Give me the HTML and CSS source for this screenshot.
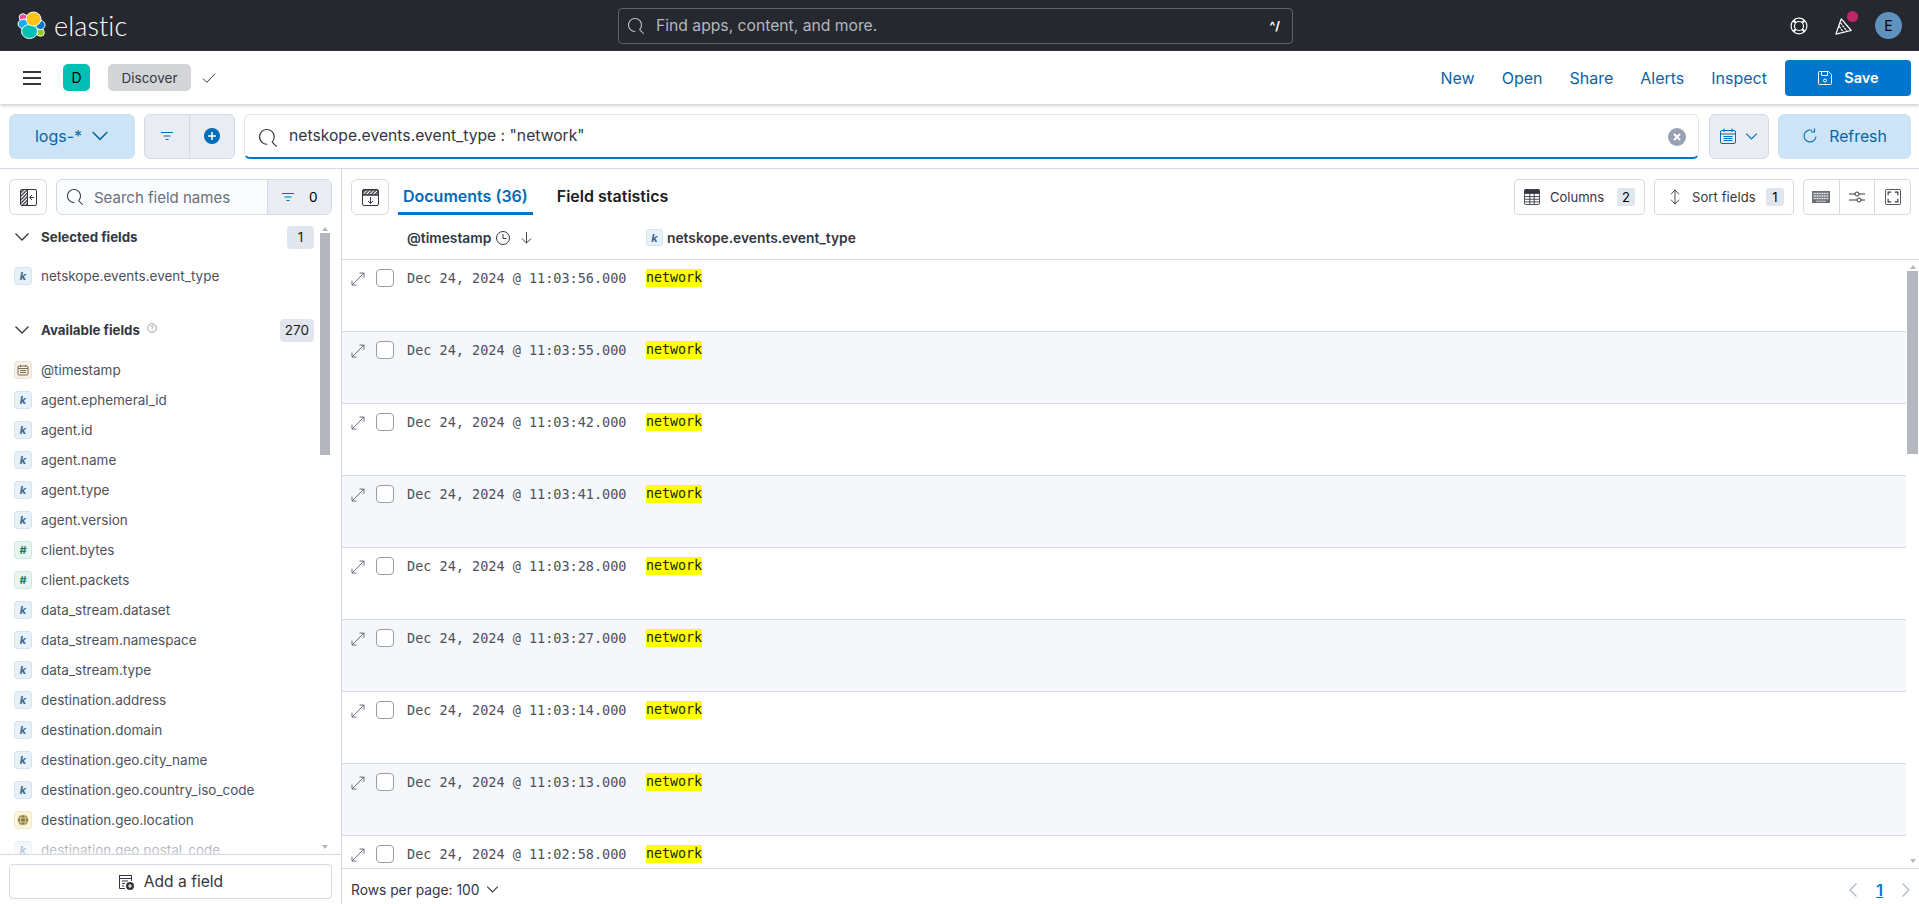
FILE: index.html
```html
<!DOCTYPE html>
<html lang="en">
<head>
    <meta charset="UTF-8">
    <meta name="viewport" content="width=device-width, initial-scale=1.0">
    <title>Discover - Elastic</title>
    <link rel="stylesheet" href="styles.css">
</head>
<body>
    <!-- shared icons -->
    <svg class="sprite" xmlns="http://www.w3.org/2000/svg">
        <symbol id="i-search" viewBox="0 0 16 16">
            <path d="M11.27 11.98l3.87 3.87a.5.5 0 0 0 .71-.71l-3.57-3.56c2.38-2.75 2.27-6.92-.34-9.53-2.73-2.73-7.17-2.73-9.9 0-2.73 2.73-2.73 7.17 0 9.9a6.96 6.96 0 0 0 4.95 2.05.5.5 0 0 0 0-1 5.96 5.96 0 0 1-4.24-1.76 6.01 6.01 0 0 1 0-8.49c2.34-2.34 6.14-2.34 8.48 0a6.01 6.01 0 0 1 .04 8.49z" fill="currentColor"/>
        </symbol>
        <symbol id="i-down" viewBox="0 0 16 16">
            <path d="M1.500 4.500L8 11l6.500-6.500" fill="none" stroke="currentColor" stroke-width="1.300"/>
        </symbol>
        <symbol id="i-filter" viewBox="0 0 16 16">
            <path d="M2 4.500h12M4.500 8h7M6.500 11.500h3" fill="none" stroke="currentColor" stroke-width="1.200"/>
        </symbol>
        <symbol id="i-expand" viewBox="0 0 14 14">
            <path d="M8.500 1h4.500v4.500M13 1L1 13M1 8.500V13h4.500" fill="none" stroke="currentColor" stroke-width="1"/>
        </symbol>
        <pattern id="hatch" width="2.500" height="2.500" patternUnits="userSpaceOnUse" patternTransform="rotate(45)">
            <rect width="2.500" height="2.500" fill="#fff"/>
            <rect width="1.300" height="2.500" fill="#343741"/>
        </pattern>
    </svg>

    <header class="top-bar">
        <div class="brand">
            <svg class="brand-logo" viewBox="0 0 27 27" stroke="#fff" stroke-width="1">
                <ellipse cx="5" cy="5.500" rx="3.800" ry="3.800" fill="#f04e98"/>
                <ellipse cx="6" cy="12" rx="6" ry="4.800" fill="#1ba9f5"/>
                <ellipse cx="22.500" cy="20.500" rx="3.800" ry="3.800" fill="#93c90e"/>
                <ellipse cx="22.500" cy="13" rx="4.500" ry="4.500" fill="#0077cc"/>
                <ellipse cx="11.500" cy="19.500" rx="8" ry="7" fill="#00bfb3"/>
                <ellipse cx="15.500" cy="7" rx="7.500" ry="7" fill="#fec514"/>
            </svg>
            <span class="brand-name">elastic</span>
        </div>
        <div class="global-search">
            <svg class="icon"><use href="#i-search"/></svg>
            <span class="global-search-text">Find apps, content, and more.</span>
            <span class="global-search-key">^/</span>
        </div>
        <div class="top-actions">
            <svg class="help-icon" viewBox="0 0 20 20" fill="none" stroke="#fff" stroke-width="1.300">
                <circle cx="10" cy="10" r="8.800"/>
                <circle cx="10" cy="10" r="5"/>
                <path d="M3.800 3.800l2.700 2.700M16.200 3.800l-2.700 2.700M3.800 16.200l2.700-2.700M16.200 16.200l-2.700-2.700" stroke-width="2.400"/>
            </svg>
            <div class="news">
                <svg class="news-icon" viewBox="0 0 20 20" fill="none" stroke="#fff" stroke-width="1.400">
                    <path d="M7 2l11 13-17 4z" stroke-linejoin="round"/>
                    <path d="M4.800 10.500l5 7M6.200 6.500l7.500 9.800" stroke-dasharray="2.500 1"/>
                </svg>
                <span class="news-dot"></span>
            </div>
            <span class="user-avatar">E</span>
        </div>
    </header>

    <nav class="app-bar">
        <div class="app-bar-left">
            <svg class="menu-icon" viewBox="0 0 18 14">
                <path d="M0 1h18M0 7h18M0 13h18" stroke="#343741" stroke-width="2"/>
            </svg>
            <span class="space-badge">D</span>
            <span class="crumb">Discover</span>
            <svg class="crumb-check" viewBox="0 0 16 16">
                <path d="M1 8.500l4.500 4.500 9.500-10" fill="none" stroke="#343741" stroke-width="1.100"/>
            </svg>
        </div>
        <div class="app-bar-right">
            <a class="app-link" href="#">New</a>
            <a class="app-link" href="#">Open</a>
            <a class="app-link" href="#">Share</a>
            <a class="app-link" href="#">Alerts</a>
            <a class="app-link" href="#">Inspect</a>
            <button class="save-btn">
                <svg class="icon" viewBox="0 0 16 16" fill="none" stroke="#fff" stroke-width="1">
                    <path d="M1.500 2.500a1 1 0 0 1 1-1h9l3 3v9a1 1 0 0 1-1 1h-11a1 1 0 0 1-1-1z"/>
                    <path d="M4.500 1.500v4h6v-4"/>
                    <circle cx="8" cy="10.500" r="1.500"/>
                </svg>
                Save
            </button>
        </div>
    </nav>

    <div class="query-bar">
        <button class="index-btn">logs-* <svg class="index-chevron"><use href="#i-down"/></svg></button>
        <div class="filter-group">
            <span class="filter-cell"><svg class="icon"><use href="#i-filter"/></svg></span>
            <span class="filter-cell">
                <svg class="icon" viewBox="0 0 16 16">
                    <circle cx="8" cy="8" r="8" fill="#006bb8"/>
                    <path d="M8 4v8M4 8h8" stroke="#fff" stroke-width="1.500"/>
                </svg>
            </span>
        </div>
        <div class="query-input">
            <svg class="query-search"><use href="#i-search"/></svg>
            <span class="query-text">netskope.events.event_type : "network"</span>
            <svg class="query-clear" viewBox="0 0 18 18">
                <circle cx="9" cy="9" r="9" fill="#98a2b3"/>
                <path d="M6 6l6 6M12 6l-6 6" stroke="#fff" stroke-width="2"/>
            </svg>
        </div>
        <button class="date-btn">
            <svg class="calendar-icon" viewBox="0 0 16 16" fill="none" stroke="#006bb8" stroke-width="1">
                <rect x="0.500" y="2.500" width="15" height="13" rx="1.500"/>
                <path d="M.500 6h15M4 .500v3.500M12 .500v3.500M3.500 8.500h9M3.500 10.500h9M3.500 12.500h9" />
            </svg>
            <svg class="chevron-sm"><use href="#i-down"/></svg>
        </button>
        <button class="refresh-btn">
            <svg class="icon" viewBox="0 0 16 16" fill="none" stroke="#006bb8" stroke-width="1.100">
                <path d="M14 8.500a6 6 0 1 1-4-6.200M12.500 0.500v3.500h-3.500" />
            </svg>
            Refresh
        </button>
    </div>

    <main class="workspace">
        <aside class="sidebar">
            <div class="sidebar-tools">
                <button class="square-btn">
                    <svg class="glyph-lg" viewBox="0 0 17 17">
                        <path d="M1 1h6.500v15H1z" fill="url(#hatch)"/>
                        <rect x="0.500" y="0.500" width="16" height="16" rx="1.500" fill="none" stroke="#343741"/>
                        <path d="M7.500 1v15" stroke="#343741"/>
                        <path d="M14 8.500H10M12 6l-2.500 2.500L12 11" fill="none" stroke="#343741"/>
                    </svg>
                </button>
                <div class="field-search">
                    <svg class="icon"><use href="#i-search"/></svg>
                    <span class="field-search-text">Search field names</span>
                    <span class="field-filter">
                        <svg class="icon"><use href="#i-filter"/></svg>
                        <span class="count-zero">0</span>
                    </span>
                </div>
            </div>

            <div class="field-scroll">
                <div class="field-list">
                    <div class="section-head">
                        <svg class="icon"><use href="#i-down"/></svg>
                        <span class="section-title">Selected fields</span>
                        <span class="count-badge">1</span>
                    </div>
                    <div class="field-row selected-row"><span class="type-k">k</span>netskope.events.event_type</div>

                    <div class="section-head available-head">
                        <svg class="icon"><use href="#i-down"/></svg>
                        <span class="section-title">Available fields</span>
                        <svg class="info-icon" viewBox="0 0 16 16" fill="none" stroke="#69707d">
                            <circle cx="8" cy="8" r="7"/>
                            <path d="M6 6.500c0-3 4-3 4-.5 0 1.500-2 1.500-2 3.500M8 11v1.500"/>
                        </svg>
                        <span class="count-badge">270</span>
                    </div>
                    <div class="field-row">
                        <span class="type-date">
                            <svg class="type-glyph" viewBox="0 0 12 12" fill="none" stroke="#7d6d4f">
                                <rect x="1" y="2" width="10" height="9" rx="1"/>
                                <path d="M1 4.500h10M3.500 1v2M8.500 1v2M3 6.500h6M3 8.500h6"/>
                            </svg>
                        </span>@timestamp
                    </div>
                    <div class="field-row"><span class="type-k">k</span>agent.ephemeral_id</div>
                    <div class="field-row"><span class="type-k">k</span>agent.id</div>
                    <div class="field-row"><span class="type-k">k</span>agent.name</div>
                    <div class="field-row"><span class="type-k">k</span>agent.type</div>
                    <div class="field-row"><span class="type-k">k</span>agent.version</div>
                    <div class="field-row"><span class="type-num">#</span>client.bytes</div>
                    <div class="field-row"><span class="type-num">#</span>client.packets</div>
                    <div class="field-row"><span class="type-k">k</span>data_stream.dataset</div>
                    <div class="field-row"><span class="type-k">k</span>data_stream.namespace</div>
                    <div class="field-row"><span class="type-k">k</span>data_stream.type</div>
                    <div class="field-row"><span class="type-k">k</span>destination.address</div>
                    <div class="field-row"><span class="type-k">k</span>destination.domain</div>
                    <div class="field-row"><span class="type-k">k</span>destination.geo.city_name</div>
                    <div class="field-row"><span class="type-k">k</span>destination.geo.country_iso_code</div>
                    <div class="field-row">
                        <span class="type-geo">
                            <svg class="type-glyph" viewBox="0 0 12 12" fill="#8a7a3a" stroke="#fdf6dc" stroke-width="0.600">
                                <circle cx="6" cy="6" r="5.500"/>
                                <ellipse cx="6" cy="6" rx="2.500" ry="5.500" fill="none"/>
                                <path d="M.500 4h11M.500 8h11" fill="none"/>
                            </svg>
                        </span>destination.geo.location
                    </div>
                    <div class="field-row"><span class="type-k">k</span>destination.geo.postal_code</div>
                </div>
                <div class="list-fade"></div>
                <div class="sidebar-scrollbar">
                    <span class="arrow-up"></span>
                    <span class="sidebar-thumb"></span>
                    <span class="arrow-down"></span>
                </div>
            </div>

            <div class="sidebar-foot">
                <button class="add-field-btn">
                    <svg class="icon" viewBox="0 0 16 16">
                        <path d="M13.500 7V1.500h-12v13H7" fill="none" stroke="#343741"/>
                        <path d="M1.500 1.500h12v3h-12zM4 7h6M4 9.500h3M4 12h2" fill="none" stroke="#343741"/>
                        <circle cx="12" cy="12" r="4" fill="#343741"/>
                        <path d="M12 10v4M10 12h4" stroke="#fff"/>
                    </svg>
                    Add a field
                </button>
            </div>
        </aside>

        <section class="results">
            <div class="results-tools">
                <button class="square-btn doc-btn">
                    <svg class="glyph-lg" viewBox="0 0 17 17" fill="none" stroke="#343741">
                        <path d="M1 1h15v5H1z" fill="url(#hatch)"/>
                        <rect x="0.500" y="0.500" width="16" height="16" rx="1.500"/>
                        <path d="M.500 6h16M8.500 8v6.500M6 12l2.500 2.500L11 12"/>
                    </svg>
                </button>
                <div class="tabs">
                    <span class="tab tab-active">Documents (36)</span>
                    <span class="tab">Field statistics</span>
                </div>
                <div class="grid-tools">
                    <button class="tool-btn">
                        <svg class="tool-icon" viewBox="0 0 18 18" fill="none" stroke="#343741">
                            <rect x="0.500" y="0.500" width="17" height="17" rx="1.500"/>
                            <path d="M1 1h16v4H1z" fill="#343741"/>
                            <path d="M1 8.500h16M1 11.500h16M1 14.500h16M6.500 5v12.500M11.500 5v12.500"/>
                        </svg>
                        Columns <span class="tool-count">2</span>
                    </button>
                    <button class="tool-btn sort-btn">
                        <svg class="tool-icon" viewBox="0 0 16 18" fill="none" stroke="#343741">
                            <path d="M8 1L3.500 6M8 1l4.500 5M8 1v16M8 17l-4.500-5M8 17l4.500-5"/>
                        </svg>
                        Sort fields <span class="tool-count">1</span>
                    </button>
                    <div class="tool-group">
                        <span class="tool-cell">
                            <svg class="kbd-icon" viewBox="0 0 18 12">
                                <rect width="18" height="12" fill="#6b6f76"/>
                                <path d="M1.500 2.500h15M1.500 5h15M1.500 7.500h15" stroke="#eceded" stroke-width="1.300" stroke-dasharray="1.200 .5"/>
                                <path d="M4 10.200h10" stroke="#c9cbce"/>
                            </svg>
                        </span>
                        <span class="tool-cell">
                            <svg class="tool-icon" viewBox="0 0 16 16" fill="none" stroke="#343741">
                                <path d="M0 5h6M10 5h6M0 11h8M12 11h4"/>
                                <circle cx="8" cy="5" r="2"/>
                                <circle cx="10" cy="11" r="2"/>
                            </svg>
                        </span>
                        <span class="tool-cell">
                            <svg class="tool-icon" viewBox="0 0 18 18" fill="none" stroke="#343741">
                                <rect x="0.500" y="0.500" width="17" height="17" rx="1.500"/>
                                <path d="M3.500 7V3.500H7M11 3.500h3.500V7M14.500 11v3.500H11M7 14.500H3.500V11" stroke-width="1.300"/>
                            </svg>
                        </span>
                    </div>
                </div>
            </div>

            <div class="grid-head">
                <div class="head-time">@timestamp
                    <svg class="clock-icon" viewBox="0 0 14 14" fill="none" stroke="#343741">
                        <circle cx="7" cy="7" r="6.500"/>
                        <path d="M7 3v4.500h3.500"/>
                    </svg>
                    <svg class="sort-arrow" viewBox="0 0 14 14" fill="none" stroke="#343741">
                        <path d="M7 1v12M2 8l5 5 5-5"/>
                    </svg>
                </div>
                <div class="head-field"><span class="type-k type-k-sm">k</span>netskope.events.event_type</div>
            </div>

            <div class="grid-body">
                <div class="grid-rows">
                    <div class="doc-row">
                        <svg class="row-expand"><use href="#i-expand"/></svg><span class="row-check"></span>
                        <span class="row-time">Dec 24, 2024 @ 11:03:56.000</span><mark class="row-hit">network</mark>
                    </div>
                    <div class="doc-row">
                        <svg class="row-expand"><use href="#i-expand"/></svg><span class="row-check"></span>
                        <span class="row-time">Dec 24, 2024 @ 11:03:55.000</span><mark class="row-hit">network</mark>
                    </div>
                    <div class="doc-row">
                        <svg class="row-expand"><use href="#i-expand"/></svg><span class="row-check"></span>
                        <span class="row-time">Dec 24, 2024 @ 11:03:42.000</span><mark class="row-hit">network</mark>
                    </div>
                    <div class="doc-row">
                        <svg class="row-expand"><use href="#i-expand"/></svg><span class="row-check"></span>
                        <span class="row-time">Dec 24, 2024 @ 11:03:41.000</span><mark class="row-hit">network</mark>
                    </div>
                    <div class="doc-row">
                        <svg class="row-expand"><use href="#i-expand"/></svg><span class="row-check"></span>
                        <span class="row-time">Dec 24, 2024 @ 11:03:28.000</span><mark class="row-hit">network</mark>
                    </div>
                    <div class="doc-row">
                        <svg class="row-expand"><use href="#i-expand"/></svg><span class="row-check"></span>
                        <span class="row-time">Dec 24, 2024 @ 11:03:27.000</span><mark class="row-hit">network</mark>
                    </div>
                    <div class="doc-row">
                        <svg class="row-expand"><use href="#i-expand"/></svg><span class="row-check"></span>
                        <span class="row-time">Dec 24, 2024 @ 11:03:14.000</span><mark class="row-hit">network</mark>
                    </div>
                    <div class="doc-row">
                        <svg class="row-expand"><use href="#i-expand"/></svg><span class="row-check"></span>
                        <span class="row-time">Dec 24, 2024 @ 11:03:13.000</span><mark class="row-hit">network</mark>
                    </div>
                    <div class="doc-row">
                        <svg class="row-expand"><use href="#i-expand"/></svg><span class="row-check"></span>
                        <span class="row-time">Dec 24, 2024 @ 11:02:58.000</span><mark class="row-hit">network</mark>
                    </div>
                </div>
                <div class="grid-scrollbar">
                    <span class="arrow-up"></span>
                    <span class="grid-thumb"></span>
                    <span class="arrow-down"></span>
                </div>
            </div>

            <div class="grid-foot">
                <span class="rows-per-page">Rows per page: 100 <svg class="chevron-sm"><use href="#i-down"/></svg></span>
                <div class="pager">
                    <svg class="pager-arrow" viewBox="0 0 10 16"><path d="M8.500 1.500L2 8l6.500 6.500" fill="none" stroke="#abb4c4" stroke-width="1.200"/></svg>
                    <span class="pager-num">1</span>
                    <svg class="pager-arrow" viewBox="0 0 10 16"><path d="M1.500 1.500L8 8l-6.500 6.500" fill="none" stroke="#abb4c4" stroke-width="1.200"/></svg>
                </div>
            </div>
        </section>
    </main>
</body>
</html>
```

FILE: styles.css
```css
* {
    box-sizing: border-box;
}

html, body {
    height: 100%;
}

body {
    margin: 0;
    display: flex;
    flex-direction: column;
    overflow: hidden;
    font-family: Inter, "Noto Sans", sans-serif;
    font-size: 14px;
    color: #343741;
    background-color: #fff;
}

button {
    font-family: inherit;
    cursor: pointer;
}

.sprite {
    position: absolute;
    width: 0;
    height: 0;
}

.icon {
    width: 16px;
    height: 16px;
    flex: none;
}

.glyph-lg {
    width: 17px;
    height: 17px;
}

/* top bar */
.top-bar {
    height: 51px;
    flex: none;
    display: flex;
    align-items: center;
    background-color: #25282f;
    color: #fff;
}

.brand {
    width: 618px;
    flex: none;
    display: flex;
    align-items: center;
    padding-left: 18px;
    gap: 9px;
}

.brand-logo {
    width: 27px;
    height: 27px;
    overflow: visible;
}

.brand-name {
    font-family: Lato, sans-serif;
    font-size: 27px;
    font-weight: 300;
    letter-spacing: 0.1px;
}

.global-search {
    width: 675px;
    height: 36px;
    flex: none;
    display: flex;
    align-items: center;
    padding: 0 12px 0 9px;
    gap: 12px;
    border: 1px solid #5e6167;
    border-radius: 4px;
    color: #c6c8cb;
}

.global-search-text {
    flex: 1;
    font-size: 15.7px;
    color: #b5b7ba;
}

.global-search-key {
    font-size: 12px;
    font-weight: 700;
    color: #fff;
}

.top-actions {
    flex: 1;
    display: flex;
    align-items: center;
    justify-content: flex-end;
    padding-right: 17px;
}

.help-icon {
    width: 18px;
    height: 18px;
}

.news {
    position: relative;
    width: 18px;
    height: 18px;
    margin-left: 27px;
}

.news-icon {
    width: 18px;
    height: 18px;
}

.news-dot {
    position: absolute;
    top: -6px;
    right: -5px;
    width: 11px;
    height: 11px;
    border-radius: 50%;
    background-color: #bd2769;
}

.user-avatar {
    width: 27px;
    height: 27px;
    margin-left: 22px;
    display: flex;
    align-items: center;
    justify-content: center;
    border-radius: 50%;
    background-color: #6092c0;
    color: #000;
    font-size: 14px;
}

/* app bar */
.app-bar {
    position: relative;
    z-index: 2;
    height: 53px;
    flex: none;
    display: flex;
    align-items: center;
    justify-content: space-between;
    padding: 0 8px 0 23px;
    background-color: #fff;
    box-shadow: 0 1px 4px rgba(105, 112, 125, 0.45);
}

.app-bar-left {
    display: flex;
    align-items: center;
}

.menu-icon {
    width: 18px;
    height: 14px;
}

.space-badge {
    width: 27px;
    height: 27px;
    margin-left: 22px;
    display: flex;
    align-items: center;
    justify-content: center;
    border-radius: 5px;
    background-color: #00bfb3;
    color: #000;
    font-size: 14px;
}

.crumb {
    width: 83px;
    height: 27px;
    margin-left: 18px;
    display: flex;
    align-items: center;
    justify-content: center;
    border-radius: 5px;
    background-color: #d3d5d8;
    color: #343741;
    font-size: 13.5px;
}

.crumb-check {
    width: 14px;
    height: 14px;
    margin-left: 11px;
}

.app-bar-right {
    display: flex;
    align-items: center;
}

.app-link {
    margin-right: 27px;
    font-size: 16px;
    color: #0b64a5;
    text-decoration: none;
}

.app-link:nth-child(5) {
    margin-right: 18px;
}

.save-btn {
    width: 126px;
    height: 36px;
    display: flex;
    align-items: center;
    justify-content: center;
    gap: 11px;
    border: none;
    border-radius: 4px;
    background-color: #0077cc;
    color: #fff;
    font-size: 14.5px;
    font-weight: 600;
}

/* query row */
.query-bar {
    height: 65px;
    flex: none;
    display: flex;
    align-items: center;
    padding: 0 8px 0 9px;
    border-bottom: 1px solid #d3dae6;
}

.index-btn {
    width: 126px;
    height: 45px;
    display: flex;
    align-items: center;
    justify-content: center;
    gap: 9px;
    border: none;
    border-radius: 6px;
    background-color: #cce4f5;
    color: #0b64a5;
    font-size: 16px;
}

.index-chevron {
    width: 18px;
    height: 18px;
}

.filter-group {
    width: 91px;
    height: 45px;
    margin-left: 9px;
    display: flex;
    border: 1px solid #d3dae6;
    border-radius: 6px;
    background-color: #e9edf3;
    color: #006bb8;
}

.filter-cell {
    flex: 1;
    display: flex;
    align-items: center;
    justify-content: center;
}

.filter-cell + .filter-cell {
    border-left: 1px solid #d3dae6;
}

.query-input {
    flex: 1;
    height: 45px;
    margin-left: 9px;
    display: flex;
    align-items: center;
    padding: 0 12px 0 14px;
    border: 1px solid #e3e6ef;
    border-bottom: 2px solid #0077cc;
    border-radius: 6px;
    background-color: #fff;
}

.query-search {
    width: 18px;
    height: 18px;
    flex: none;
    margin-top: 4px;
    color: #343741;
}

.query-text {
    flex: 1;
    margin-left: 12px;
    font-size: 15.7px;
    color: #343741;
}

.query-clear {
    width: 18px;
    height: 18px;
    margin-top: 3px;
}

.date-btn {
    width: 60px;
    height: 45px;
    margin-left: 10px;
    display: flex;
    align-items: center;
    justify-content: center;
    gap: 9px;
    padding: 0;
    border: 1px solid #d3dae6;
    border-radius: 6px;
    background-color: #e9edf3;
    color: #006bb8;
}

.calendar-icon {
    width: 16px;
    height: 16px;
}

.chevron-sm {
    width: 13px;
    height: 13px;
}

.refresh-btn {
    width: 133px;
    height: 45px;
    margin-left: 9px;
    display: flex;
    align-items: center;
    justify-content: center;
    gap: 11px;
    border: none;
    border-radius: 6px;
    background-color: #cce4f5;
    color: #0b64a5;
    font-size: 15.8px;
}

/* work area */
.workspace {
    flex: 1;
    min-height: 0;
    display: flex;
}

.sidebar {
    width: 342px;
    flex: none;
    display: flex;
    flex-direction: column;
    border-right: 1px solid #d3dae6;
}

.sidebar-tools {
    height: 53px;
    flex: none;
    display: flex;
    align-items: center;
    padding: 3px 9px 0;
    gap: 9px;
}

.square-btn {
    width: 38px;
    height: 36px;
    flex: none;
    display: flex;
    align-items: center;
    justify-content: center;
    padding: 0;
    border: 1px solid #d3dae6;
    border-radius: 6px;
    background-color: #fff;
}

.field-search {
    flex: 1;
    height: 36px;
    display: flex;
    align-items: center;
    padding-left: 10px;
    border: 1px solid #d3dae6;
    border-radius: 6px;
    background-color: #fbfcfd;
    color: #343741;
}

.field-search-text {
    flex: 1;
    margin-left: 11px;
    font-size: 15px;
    color: #69707d;
}

.field-filter {
    width: 64px;
    height: 100%;
    display: flex;
    align-items: center;
    padding-left: 12px;
    gap: 13px;
    border-left: 1px solid #d3dae6;
    border-radius: 0 6px 6px 0;
    background-color: #e9edf3;
    color: #006bb8;
}

.count-zero {
    font-size: 13.5px;
    color: #000;
}

.field-scroll {
    position: relative;
    flex: 1;
    min-height: 0;
    overflow: hidden;
}

.field-list {
    padding: 1px 0 0 14px;
}

.section-head {
    height: 26px;
    display: flex;
    align-items: center;
    padding-right: 27px;
    margin-top: 1px;
}

.available-head {
    margin-top: 26px;
    margin-bottom: 12px;
}

.section-title {
    margin-left: 11px;
    font-size: 13.3px;
    font-weight: 700;
    color: #343741;
}

.section-head .count-badge {
    margin-left: auto;
}

.count-badge {
    min-width: 27px;
    height: 23px;
    padding: 0 5px;
    display: flex;
    align-items: center;
    justify-content: center;
    border-radius: 4px;
    background-color: #e0e5ee;
    font-size: 13.5px;
    color: #1a1c21;
}

.info-icon {
    width: 10px;
    height: 10px;
    margin-left: 7px;
    margin-top: -5px;
}

.field-row {
    height: 30px;
    display: flex;
    align-items: center;
    font-size: 13.5px;
    color: #4d525d;
}

.selected-row {
    margin-top: 11px;
}

.type-k, .type-num, .type-date, .type-geo {
    width: 18px;
    height: 18px;
    flex: none;
    margin-right: 9px;
    display: flex;
    align-items: center;
    justify-content: center;
    border-radius: 3px;
    font-size: 11px;
    font-weight: 700;
}

.type-k {
    border: 1px solid #d6e4f0;
    background-color: #e6f1fa;
    color: #3f6a91;
    font-style: italic;
}

.type-k-sm {
    width: 17px;
    height: 17px;
    margin-right: 4px;
}

.type-num {
    border: 1px solid #cfe8de;
    background-color: #e6f5ef;
    color: #267a5a;
}

.type-date {
    border: 1px solid #e9e3d5;
    background-color: #f5f0e6;
}

.type-geo {
    border: 1px solid #f3e8c8;
    background-color: #fdf6dc;
}

.type-glyph {
    width: 12px;
    height: 12px;
}

.list-fade {
    position: absolute;
    left: 0;
    right: 0;
    bottom: 0;
    height: 20px;
    background: linear-gradient(rgba(255, 255, 255, 0.2), rgba(255, 255, 255, 0.75));
}

.sidebar-scrollbar {
    position: absolute;
    top: 0;
    right: 11px;
    bottom: 0;
    width: 10px;
    display: flex;
    flex-direction: column;
    align-items: center;
}

.sidebar-thumb {
    width: 10px;
    height: 222px;
    margin-top: 2px;
    background-color: #b4b7bd;
}

.arrow-up, .arrow-down {
    width: 0;
    height: 0;
    flex: none;
    border-left: 3.5px solid transparent;
    border-right: 3.5px solid transparent;
}

.arrow-up {
    margin-top: 5px;
    border-bottom: 4px solid #b4b7bd;
}

.arrow-down {
    margin-top: auto;
    margin-bottom: 5px;
    border-top: 4px solid #b4b7bd;
}

.sidebar-foot {
    height: 50px;
    flex: none;
    display: flex;
    align-items: flex-start;
    padding: 9px 9px 0;
    border-top: 1px solid #d3dae6;
}

.add-field-btn {
    width: 100%;
    height: 35px;
    display: flex;
    align-items: center;
    justify-content: center;
    gap: 10px;
    border: 1px solid #d3dae6;
    border-radius: 4px;
    background-color: #fff;
    color: #343741;
    font-size: 15.6px;
}

/* results */
.results {
    flex: 1;
    min-width: 0;
    display: flex;
    flex-direction: column;
}

.results-tools {
    height: 53px;
    flex: none;
    display: flex;
    align-items: center;
    padding: 3px 8px 0 9px;
}

.tabs {
    display: flex;
    height: 36px;
    margin-left: 9px;
    gap: 19px;
}

.tab {
    display: flex;
    align-items: center;
    padding: 0 5px;
    font-size: 16px;
    font-weight: 600;
    color: #1a1c21;
    border-bottom: 3px solid transparent;
}

.tab-active {
    color: #006bb8;
    border-bottom-color: #0077cc;
}

.grid-tools {
    margin-left: auto;
    display: flex;
    gap: 9px;
}

.tool-btn {
    height: 36px;
    width: 131px;
    display: flex;
    align-items: center;
    padding: 0 9px;
    gap: 10px;
    border: 1px solid #d3dae6;
    border-radius: 4px;
    background-color: #fff;
    color: #343741;
    font-size: 13px;
    white-space: nowrap;
}

.sort-btn {
    width: 140px;
    gap: 9px;
    padding: 0 9px 0 12px;
    letter-spacing: 0.1px;
}

.tool-icon {
    width: 16px;
    height: 16px;
    flex: none;
}

.tool-count {
    width: 18px;
    height: 18px;
    flex: none;
    margin-left: auto;
    display: flex;
    align-items: center;
    justify-content: center;
    border-radius: 3px;
    background-color: #e0e5ee;
    color: #000;
}

.tool-group {
    width: 108px;
    height: 36px;
    display: flex;
    border: 1px solid #d3dae6;
    border-radius: 4px;
}

.tool-cell {
    flex: 1;
    display: flex;
    align-items: center;
    justify-content: center;
}

.tool-cell + .tool-cell {
    border-left: 1px solid #d3dae6;
}

.kbd-icon {
    width: 18px;
    height: 12px;
}

.grid-head {
    height: 38px;
    flex: none;
    display: flex;
    align-items: center;
    padding: 0 0 6px 65px;
    border-bottom: 1px solid #d3dae6;
    font-size: 13.8px;
    font-weight: 600;
    color: #343741;
}

.head-time {
    width: 239px;
    display: flex;
    align-items: center;
}

.clock-icon {
    width: 14px;
    height: 14px;
    margin-left: 5px;
}

.sort-arrow {
    width: 13px;
    height: 13px;
    margin-left: 10px;
}

.head-field {
    display: flex;
    align-items: center;
}

.grid-body {
    flex: 1;
    min-height: 0;
    display: flex;
    overflow: hidden;
}

.grid-rows {
    flex: 1;
    min-width: 0;
}

.doc-row {
    height: 72px;
    display: flex;
    align-items: flex-start;
    padding: 9px 0 0 9px;
    border-bottom: 1px solid #d3dae6;
    background-color: #fff;
}

.doc-row:nth-child(even) {
    background-color: #f5f7fa;
}

.row-expand {
    width: 14px;
    height: 14px;
    margin-top: 3px;
    color: #69707d;
}

.row-check {
    width: 18px;
    height: 18px;
    margin-left: 11px;
    border: 1px solid #9a9da3;
    border-radius: 4px;
    background-color: #fff;
}

.row-time {
    width: 239px;
    margin-left: 13px;
    font-family: "DejaVu Sans Mono", monospace;
    font-size: 13.5px;
    line-height: 18px;
    color: #4d525d;
}

.row-hit {
    font-family: "DejaVu Sans Mono", monospace;
    font-size: 13.3px;
    line-height: 18px;
    background-color: #ffff00;
    color: #1a1c21;
}

.grid-scrollbar {
    width: 13px;
    flex: none;
    display: flex;
    flex-direction: column;
    align-items: center;
}

.grid-thumb {
    width: 11px;
    height: 183px;
    margin-top: 2px;
    background-color: #b4b7bd;
}

.grid-foot {
    height: 36px;
    flex: none;
    display: flex;
    align-items: center;
    justify-content: space-between;
    padding: 6px 8px 0 9px;
    border-top: 1px solid #d3dae6;
}

.rows-per-page {
    display: flex;
    align-items: center;
    gap: 7px;
    font-size: 13.8px;
    color: #343741;
}

.pager {
    display: flex;
    align-items: center;
    gap: 18px;
}

.pager-arrow {
    width: 10px;
    height: 16px;
}

.pager-num {
    font-size: 16px;
    font-weight: 600;
    color: #0077cc;
    text-decoration: underline;
}
```
